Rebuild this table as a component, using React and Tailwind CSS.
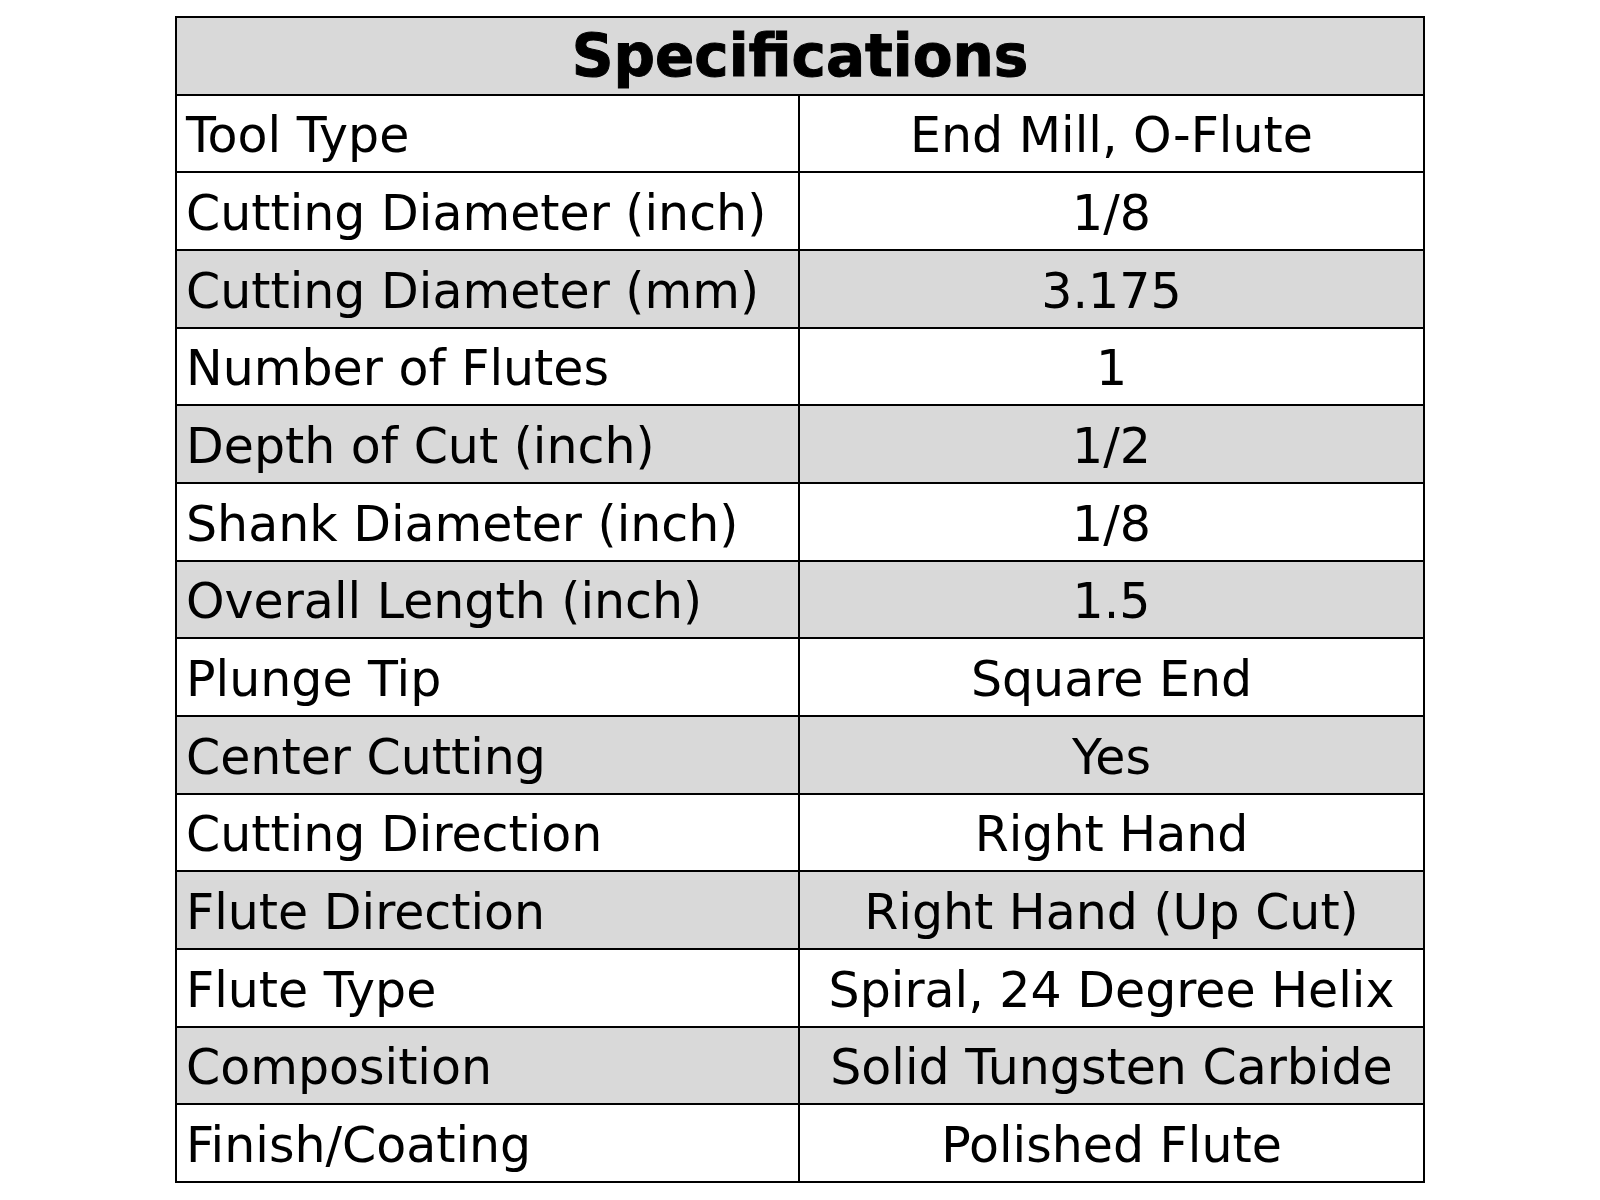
const specs = [
  ['Tool Type', 'End Mill, O-Flute'],
  ['Cutting Diameter (inch)', '1/8'],
  ['Cutting Diameter (mm)', '3.175'],
  ['Number of Flutes', '1'],
  ['Depth of Cut (inch)', '1/2'],
  ['Shank Diameter (inch)', '1/8'],
  ['Overall Length (inch)', '1.5'],
  ['Plunge Tip', 'Square End'],
  ['Center Cutting', 'Yes'],
  ['Cutting Direction', 'Right Hand'],
  ['Flute Direction', 'Right Hand (Up Cut)'],
  ['Flute Type', 'Spiral, 24 Degree Helix'],
  ['Composition', 'Solid Tungsten Carbide'],
  ['Finish/Coating', 'Polished Flute'],
]

export default function App() {
  return (
    <div className="min-h-screen bg-white pt-[16px] font-['DejaVu_Sans',sans-serif] text-black">
      <div className="mx-auto grid h-[1167px] w-[1250px] grid-cols-[621px_1fr] grid-rows-[repeat(15,minmax(0,1fr))] gap-[2px] bg-black p-[2px]">
        {/* Header */}
        <div className="col-span-2 flex items-center justify-center bg-[#d9d9d9] pt-[1px] text-[58px] font-bold leading-none [-webkit-text-stroke:1px_black]">
          Specifications
        </div>

        {specs.map(([label, value], i) => {
          const bg = i >= 2 && i % 2 === 0 ? 'bg-[#d9d9d9]' : 'bg-white'
          return [
            <div key={label + '-l'} className={`flex items-center pl-[9px] pt-[5px] text-[49px] ${bg}`}>
              {label}
            </div>,
            <div key={label + '-v'} className={`flex items-center justify-center pt-[5px] text-[49px] ${bg}`}>
              {value}
            </div>,
          ]
        })}
      </div>
    </div>
  )
}
